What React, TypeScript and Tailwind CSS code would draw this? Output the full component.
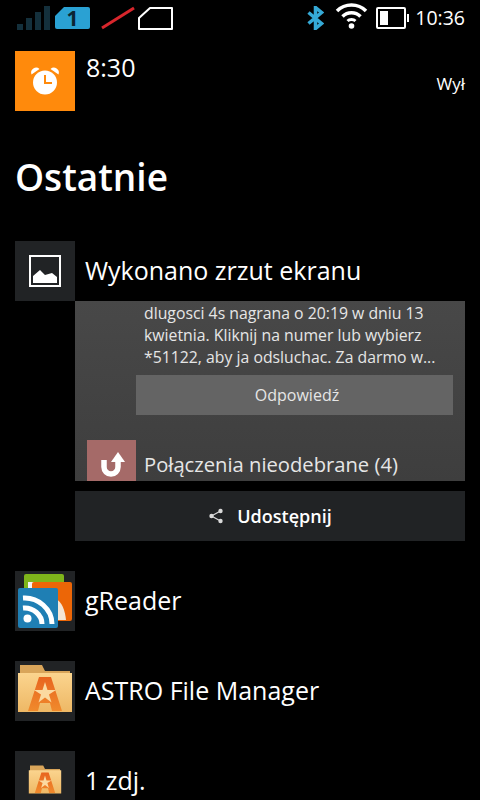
import React from 'react';

const font = { fontFamily: '"Open Sans", "Noto Sans", sans-serif' };

const SignalIcon = () => (
  <svg width="34" height="24" viewBox="0 0 34 24">
    <rect x="0" y="18" width="6" height="6" fill="#14303c" />
    <rect x="9" y="12" width="6" height="12" fill="#14303c" />
    <rect x="18" y="6" width="6" height="18" fill="#14303c" />
    <rect x="27" y="0" width="6" height="24" fill="#14303c" />
  </svg>
);

const SimBadge = () => (
  <div className="relative w-[35px] h-[22px]">
    <svg width="35" height="22" viewBox="0 0 35 22" className="block">
      <path d="M9 0H33a2 2 0 0 1 2 2V20a2 2 0 0 1-2 2H2a2 2 0 0 1-2-2V9z" fill="#2aa1d3" />
    </svg>
    <span className="absolute inset-0 flex items-center justify-center text-[21px] font-bold leading-none text-[#0c2633]">1</span>
  </div>
);

const NoSimSlash = () => (
  <svg width="34" height="24" viewBox="0 0 34 24">
    <path d="M1 22L33 2" stroke="#d8262c" strokeWidth="3" />
  </svg>
);

const SimOutline = () => (
  <svg width="35" height="23" viewBox="0 0 35 23">
    <path d="M12 1H34V22H1V11z" fill="none" stroke="#fff" strokeWidth="2" strokeLinejoin="round" />
  </svg>
);

const BluetoothIcon = () => (
  <svg width="17" height="24" viewBox="0 0 17 24">
    <path d="M1.500 6.500L14.500 17.500L8.500 22.500V1.500L14.500 6.500L1.500 17.500" fill="none" stroke="#35a9d6" strokeWidth="3.500" />
  </svg>
);

const WifiIcon = () => (
  <svg width="33" height="27" viewBox="0 0 33 27">
    <path d="M2 9C10 1 23 1 31 9" fill="none" stroke="#fff" strokeWidth="3.5" />
    <path d="M7.5 14.5C12.5 9.5 20.5 9.5 25.5 14.5" fill="none" stroke="#fff" strokeWidth="3.5" />
    <path d="M12.5 19C14.5 17 18.5 17 20.5 19" fill="none" stroke="#fff" strokeWidth="3" />
    <circle cx="16.5" cy="24" r="2.8" fill="#fff" />
  </svg>
);

const BatteryIcon = () => (
  <svg width="33" height="22" viewBox="0 0 33 22">
    <rect x="1" y="1" width="28" height="20" rx="1" fill="none" stroke="#fff" strokeWidth="2" />
    <rect x="4" y="4" width="8" height="14" fill="#fff" />
    <rect x="31" y="7" width="2" height="8" fill="#fff" />
  </svg>
);

const AlarmIcon = () => (
  <svg width="30" height="30" viewBox="0 0 30 30">
    <circle cx="15" cy="16.5" r="12" fill="#fff" />
    <path d="M1.5 8.5a5 5 0 0 1 8-5.5z" fill="#fff" />
    <path d="M28.5 8.5a5 5 0 0 0-8-5.5z" fill="#fff" />
    <path d="M15 9V17H22" fill="none" stroke="#ff8a0c" strokeWidth="2" />
  </svg>
);

const PictureIcon = () => (
  <svg width="32" height="32" viewBox="0 0 32 32">
    <rect x="1" y="1" width="30" height="30" fill="none" stroke="#fff" strokeWidth="2" />
    <path d="M4 28V21L11 15L16 20L23 18L28 22V28z" fill="#fff" />
  </svg>
);

const MissedIcon = () => (
  <svg width="26" height="26" viewBox="0 0 26 26">
    <path d="M3 8V15a7 7 0 0 0 14 0V8" fill="none" stroke="#fff" strokeWidth="5.500" />
    <path d="M10 10L17 0L24 10z" fill="#fff" />
  </svg>
);

const ShareIcon = () => (
  <svg width="16" height="16" viewBox="0 0 16 16">
    <path d="M12.500 3L3.500 8L12.500 13" fill="none" stroke="#d9d9d9" strokeWidth="1.200" />
    <circle cx="12.500" cy="3" r="2.200" fill="#d9d9d9" />
    <circle cx="3.500" cy="8" r="2.200" fill="#d9d9d9" />
    <circle cx="12.500" cy="13" r="2.200" fill="#d9d9d9" />
  </svg>
);

const GReaderIcon = () => (
  <svg width="60" height="60" viewBox="0 0 60 60">
    <rect x="9" y="3" width="40" height="30" rx="2" fill="#7fb51b" />
    <rect x="13" y="11" width="8" height="10" fill="#f4f4f4" />
    <rect x="17" y="11" width="40" height="39" rx="2" fill="#ec6607" />
    <path d="M40 27C47 31 50 39 51 49H42z" fill="#f4e6d6" />
    <rect x="3" y="17" width="40" height="40" rx="2" fill="#1f7fb4" />
    <path d="M8 27C23 26 37 38 37 53" fill="none" stroke="#fff" strokeWidth="5" />
    <path d="M8 37C18 36 27 44 27 53" fill="none" stroke="#fff" strokeWidth="5" />
    <circle cx="12.500" cy="47.500" r="4" fill="#fff" />
  </svg>
);

const AstroIcon = ({ size, id }: { size: number; id: string }) => (
  <svg width={size} height={size} viewBox="0 0 60 60">
    <defs>
      <linearGradient id={`folder-${id}`} x1="0" y1="0" x2="0" y2="1">
        <stop offset="0" stopColor="#fbd48e" />
        <stop offset="1" stopColor="#eeb865" />
      </linearGradient>
      <linearGradient id={`letter-${id}`} x1="0" y1="0" x2="0" y2="1">
        <stop offset="0" stopColor="#e8651f" />
        <stop offset="1" stopColor="#f08a2c" />
      </linearGradient>
    </defs>
    <path d="M5 4H27L30 10H55V20H5z" fill="#d9a55a" />
    <path d="M3 12H57V51H3z" fill={`url(#folder-${id})`} />
    <path d="M13 50L24 16H36L47 50H37L35 42H25L23 50z" fill={`url(#letter-${id})`} />
    <path d="M30 21L32.500 29H41L34 33.500L36.500 41.500L30 36.500L23.500 41.500L26 33.500L19 29H27.500z" fill="#fbd9a0" />
  </svg>
);

function Row({ icon, label, top }: { icon: React.ReactNode; label: string; top: string }) {
  return (
    <div className={`flex items-center h-[60px] pl-[15px] ${top}`}>
      <div className="w-[60px] h-[60px] shrink-0 bg-[#212325] flex items-center justify-center">{icon}</div>
      <span className="ml-[10px] pb-[2px] text-[25px] leading-none text-white whitespace-nowrap">{label}</span>
    </div>
  );
}

export default function App() {
  return (
    <div className="w-[480px] h-[800px] bg-black overflow-hidden text-white" style={font}>
      {/* Status bar */}
      <div className="flex items-center h-[36px] pl-[17px] pr-[15px]">
        <SignalIcon />
        <div className="ml-[4px]"><SimBadge /></div>
        <div className="ml-[11px]"><NoSimSlash /></div>
        <div className="ml-[3px]"><SimOutline /></div>
        <div className="ml-auto flex items-center">
          <BluetoothIcon />
          <div className="ml-[11px] -mt-[6px]"><WifiIcon /></div>
          <div className="ml-[8px]"><BatteryIcon /></div>
          <span className="ml-[6px] text-[19.5px] leading-none">10:36</span>
        </div>
      </div>

      {/* Alarm */}
      <div className="flex h-[60px] mt-[15px] pl-[15px] pr-[15px]">
        <div className="w-[60px] h-[60px] bg-[#ff8a0c] flex items-center justify-center"><AlarmIcon /></div>
        <span className="ml-[11px] mt-[1px] text-[25px] leading-[30px]">8:30</span>
        <span className="ml-auto mt-[21px] text-[17px] leading-[24px]">Wył</span>
      </div>

      <h1 className="ml-[15px] mt-[44px] text-[37px] leading-[44px] font-semibold">Ostatnie</h1>

      <Row icon={<PictureIcon />} label="Wykonano zrzut ekranu" top="mt-[42px]" />

      {/* Screenshot preview */}
      <div className="ml-[75px] w-[390px] h-[180px] bg-gradient-to-b from-[#484848] to-[#3e3e3e] overflow-hidden">
        <p className="ml-[69px] w-[310px] mt-[1px] text-[15.8px] leading-[22px] text-[#e6e6e6]">
          <span className="block whitespace-nowrap">dlugosci 4s nagrana o 20:19 w dniu 13</span>
          <span className="block whitespace-nowrap">kwietnia. Kliknij na numer lub wybierz</span>
          <span className="block whitespace-nowrap">*51122, aby ja odsluchac. Za darmo w...</span>
        </p>
        <div className="ml-[61px] mt-[7px] w-[317px] h-[40px] pl-[5px] bg-[#646464] flex items-center justify-center text-[16px] text-[#e6e6e6]">
          Odpowiedź
        </div>
        <div className="flex ml-[12px] mt-[25px]">
          <div className="w-[49px] h-[60px] bg-[#a56a68] pl-[14px] pt-[12px] shrink-0"><MissedIcon /></div>
          <span className="ml-[8px] mt-[9px] text-[20.2px] leading-[30px] text-[#e6e6e6] whitespace-nowrap">Połączenia nieodebrane (4)</span>
        </div>
      </div>

      <div className="ml-[75px] mt-[10px] w-[390px] h-[50px] bg-[#212325] flex items-center justify-center gap-[13px] text-[18px] font-semibold">
        <ShareIcon />
        <span>Udostępnij</span>
      </div>

      <Row icon={<GReaderIcon />} label="gReader" top="mt-[30px]" />
      <Row icon={<AstroIcon size={60} id="large" />} label="ASTRO File Manager" top="mt-[30px]" />
      <Row icon={<AstroIcon size={36} id="small" />} label="1 zdj." top="mt-[30px]" />
    </div>
  );
}
